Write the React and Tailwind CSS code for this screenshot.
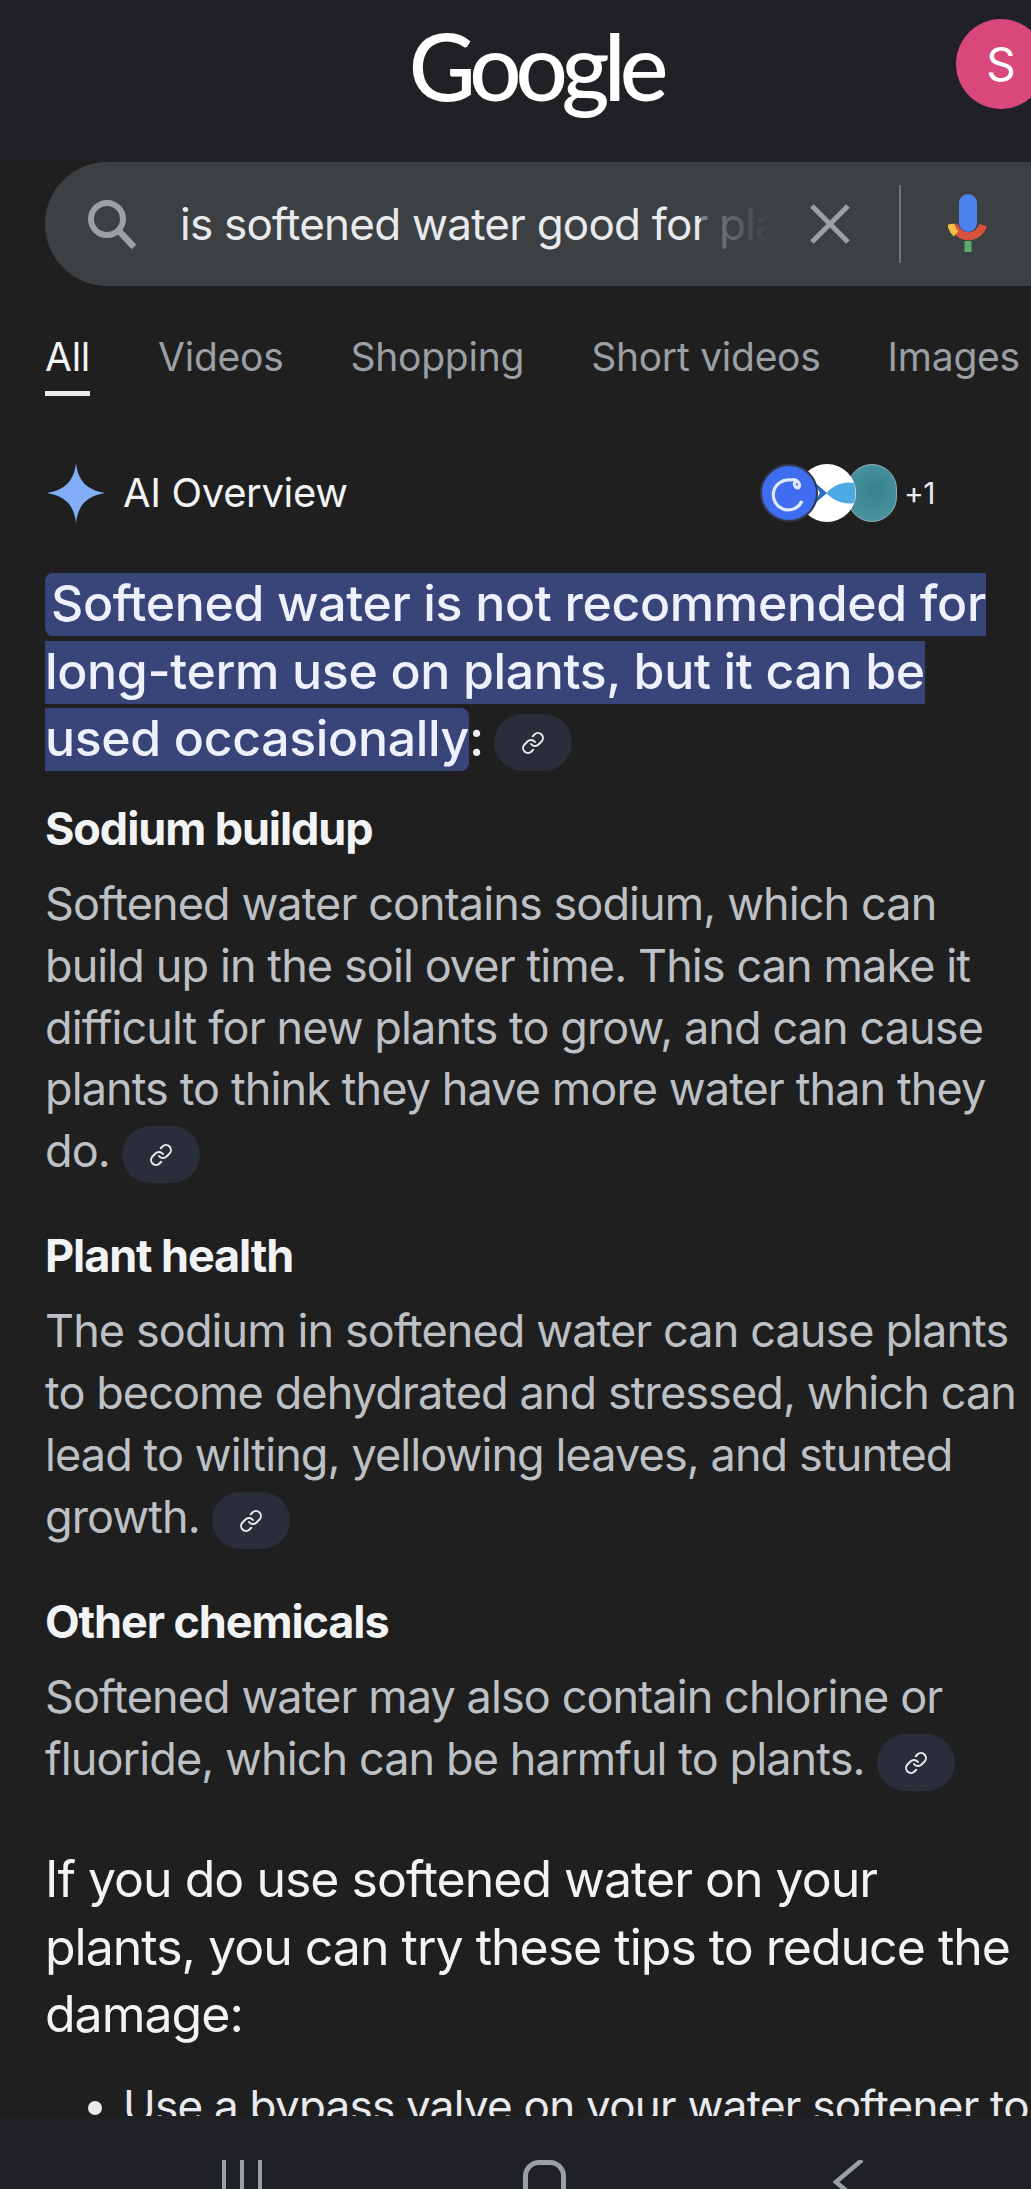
import React from 'react'
import { Link } from 'lucide-react'

const LinkChip = ({ className = '' }) => (
  <span className={`inline-flex h-[57px] w-[78px] items-center justify-center rounded-full bg-[#2a2d3a] align-middle text-[#e8eaed] ${className}`}>
    <Link size={24} strokeWidth={2} />
  </span>
)

const Section = ({ title, lines }) => (
  <section>
    <h2 className="text-[45px] leading-[62px] font-bold tracking-[-1.1px] text-[#f1f3f4]">{title}</h2>
    <p className="mt-[13px] text-[45px] leading-[61.8px] tracking-[-0.9px] text-[#bdc1c6] whitespace-nowrap">
      {lines.map((line, i) => (
        <span key={i}>
          {line}
          {i < lines.length - 1 ? <br /> : <LinkChip className="ml-[12px]" />}
        </span>
      ))}
    </p>
  </section>
)

const SearchBar = () => (
  <div className="ml-[45px] flex h-[124px] items-center rounded-l-full rounded-r-[62px] bg-[#3c4043]">
    <svg className="ml-[42px] shrink-0" width="50" height="50" viewBox="0 0 50 50" fill="none" stroke="#9aa0a6" strokeWidth="6">
      <circle cx="20" cy="20" r="16" />
      <path d="M31 31 L47 48" strokeWidth="6.5" />
    </svg>
    <div className="relative ml-[43px] w-[591px] overflow-hidden whitespace-nowrap text-[44px] tracking-[-0.77px] text-[#e8eaed]">
      is softened water good for plants
      <div className="absolute inset-y-0 right-0 w-[70px] bg-gradient-to-r from-[#3c404399] to-[#3c4043]" />
    </div>
    <svg className="ml-[39px] shrink-0" width="40" height="40" viewBox="0 0 40 40" stroke="#9aa0a6" strokeWidth="5">
      <path d="M2 2 L38 38 M38 2 L2 38" />
    </svg>
    <div className="ml-[49px] h-[78px] w-[2px] shrink-0 bg-[#70757a]" />
    <svg className="ml-[47px] shrink-0" width="42" height="60" viewBox="0 0 42 60" fill="none">
      <rect x="11" y="0" width="18" height="38" rx="9" fill="#4d82ee" />
      <path d="M6 31 A15 15 0 0 0 35 31" stroke="#d9503f" strokeWidth="8" />
      <path d="M3 30 A17 17 0 0 0 8 40" stroke="#f1bd42" strokeWidth="7" />
      <rect x="16.5" y="47" width="7" height="11" fill="#5cab6c" />
    </svg>
  </div>
)

const Tabs = () => (
  <nav className="mt-[46px] flex h-[66px] pl-[45px] text-[39px] leading-[50px] tracking-[-0.25px] whitespace-nowrap text-[#9aa0a6]">
    <div className="mr-[68px] flex flex-col items-stretch text-[#f1f3f4]">
      <span>All</span>
      <span className="mt-[9px] h-[5px] bg-[#e8eaed]" />
    </div>
    <span className="mr-[67px]">Videos</span>
    <span className="mr-[67px]">Shopping</span>
    <span className="mr-[67px]">Short videos</span>
    <span>Images</span>
  </nav>
)

const Avatars = () => (
  <div className="flex items-center">
    <div className="relative z-30 flex h-[58px] w-[58px] items-center justify-center rounded-full border-2 border-[#32384a] bg-[#3e6df0]">
      <svg width="42" height="42" viewBox="0 0 42 42" fill="none" stroke="#dfe8ff" strokeWidth="3.2">
        <path d="M34 29 A15 15 0 1 1 22 8 C28 6 33 11 31 15 C29 18 24 13 28 7" />
      </svg>
    </div>
    <div className="relative z-20 ml-[-20px] flex h-[58px] w-[58px] items-center justify-end overflow-hidden rounded-full bg-white">
      <svg width="44" height="36" viewBox="0 0 44 36">
        <path d="M0 5 L15 18 L0 31 L8 18 Z" fill="#2b6cc4" />
        <path d="M14 18 C22 10 32 6 42 8 C44 15 44 22 42 28 C32 30 22 26 14 18 Z" fill="#4ea9e2" />
      </svg>
    </div>
    <div className="relative z-10 ml-[-9px] h-[58px] w-[50px] rounded-full border border-[#8fb0b5] bg-[radial-gradient(circle_at_55%_45%,#37808d,#4f98a5)]" />
    <span className="ml-[7px] text-[30px] leading-none tracking-[-0.5px] text-[#e8eaed]">+1</span>
  </div>
)

const NavBar = () => (
  <footer className="relative flex h-[73px] shrink-0 items-start bg-[#202124] pt-[44px]">
    <div className="ml-[222px] flex h-[40px] w-[40px] justify-between">
      <span className="h-full w-[4px] bg-[#9aa0a6]" />
      <span className="h-full w-[4px] bg-[#9aa0a6]" />
      <span className="h-full w-[4px] bg-[#9aa0a6]" />
    </div>
    <div className="ml-[261px] h-[50px] w-[43px] rounded-t-[16px] border-[5px] border-[#9aa0a6]" />
    <svg className="ml-[267px]" width="32" height="40" viewBox="0 0 32 40" fill="none" stroke="#9aa0a6" strokeWidth="4.5">
      <path d="M29 0 L3 22 L29 44" />
    </svg>
  </footer>
)

export default function App() {
  return (
    <div className="flex h-[2189px] w-[1031px] flex-col overflow-hidden bg-[#1f1f1f] font-['Inter',sans-serif]">
      <main className="min-h-0 flex-1 overflow-hidden">
        <header className="relative h-[162px] bg-[#202124]">
          <div className="pl-[40px] pt-[16px] text-center text-[92px] leading-[100px] font-medium tracking-[-6px] text-white font-['Lato',sans-serif]">
            Google
          </div>
          <div className="absolute right-[-15px] top-[19px] flex h-[90px] w-[90px] items-center justify-center rounded-full bg-[#d8487b] text-[46px] text-white">
            S
          </div>
        </header>
        <SearchBar />
        <Tabs />

        <div className="mt-[65px] flex h-[60px] items-center pl-[47px]">
          <svg width="58" height="60" viewBox="0 0 58 60" className="shrink-0">
            <path d="M29 0 C31 18 40 27 58 30 C40 33 31 42 29 60 C27 42 18 33 0 30 C18 27 27 18 29 0 Z" fill="#82aef8" />
          </svg>
          <span className="ml-[18px] text-[40px] tracking-[-0.35px] text-[#f1f3f4]">AI Overview</span>
          <div className="ml-auto mr-[96px]">
            <Avatars />
          </div>
        </div>

        <div className="pl-[45px] pt-[50px]">
          <div className="flex flex-col gap-[4.5px] text-[50px] leading-[60px] font-medium tracking-[-0.35px] text-[#eef0fb] whitespace-nowrap">
            <span className="h-[63px] w-fit rounded-l-[8px] bg-[#394579] pl-[6px]">Softened water is not recommended for</span>
            <span className="h-[63px] w-fit bg-[#394579]">long-term use on plants, but it can be</span>
            <div className="flex items-end">
              <span className="h-[63px] rounded-r-[8px] bg-[#394579]">used occasionally</span>
              <span className="h-[63px]">:</span>
              <LinkChip className="ml-[10px]" />
            </div>
          </div>
          <div className="mt-[27px] flex flex-col gap-[42px]">
            <Section
              title="Sodium buildup"
              lines={[
                'Softened water contains sodium, which can',
                'build up in the soil over time. This can make it',
                'difficult for new plants to grow, and can cause',
                'plants to think they have more water than they',
                'do.',
              ]}
            />
            <Section
              title="Plant health"
              lines={[
                'The sodium in softened water can cause plants',
                'to become dehydrated and stressed, which can',
                'lead to wilting, yellowing leaves, and stunted',
                'growth.',
              ]}
            />
            <Section
              title="Other chemicals"
              lines={[
                'Softened water may also contain chlorine or',
                'fluoride, which can be harmful to plants.',
              ]}
            />
          </div>
          <p className="mt-[55px] text-[50px] leading-[67.5px] tracking-[-1px] text-[#f1f3f4] whitespace-nowrap">
            If you do use softened water on your
            <br />
            plants, you can try these tips to reduce the
            <br />
            damage:
          </p>
          <ul className="mt-[26px] list-disc pl-[78px] text-[44px] leading-[62px] tracking-[-0.75px] text-[#e8eaed] whitespace-nowrap">
            <li>Use a bypass valve on your water softener to</li>
          </ul>
        </div>
      </main>
      <NavBar />
    </div>
  )
}
